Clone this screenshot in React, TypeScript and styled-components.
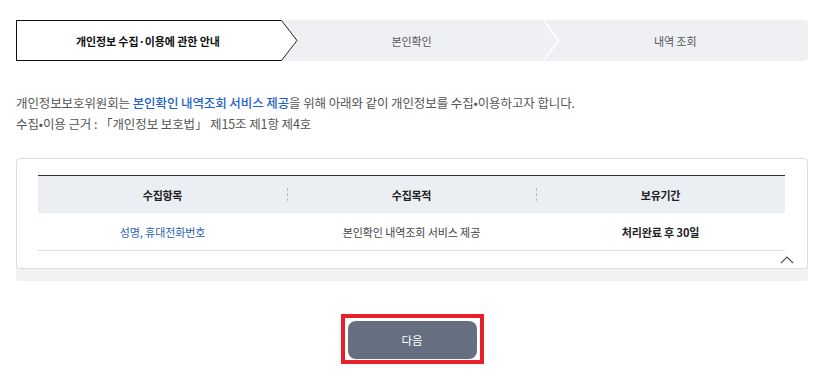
import React from 'react'
import styled, { createGlobalStyle } from 'styled-components'

const GlobalStyle = createGlobalStyle`
  body {
    margin: 0;
    background: #fff;
    font-family: 'Noto Sans CJK KR', 'Noto Sans', sans-serif;
  }
`

const Page = styled.div`
  width: 792px;
  padding: 20px 24px 0 16px;
`

const Steps = styled.ol`
  display: flex;
  height: 41px;
  margin: 0;
  padding: 0;
  list-style: none;
  background: #eff0f4;
  border-radius: 0 4px 4px 0;
`

const Step = styled.li<{ $active?: boolean }>`
  position: relative;
  flex: 1;
  display: flex;
  align-items: center;
  justify-content: center;
  box-sizing: border-box;
  font-size: 11px;
  letter-spacing: -0.1px;
  color: ${p => (p.$active ? '#111' : '#555')};
  font-weight: ${p => (p.$active ? 700 : 400)};
  background: ${p => (p.$active ? '#fff' : 'transparent')};
  border: ${p => (p.$active ? '1px solid #111' : 'none')};
  border-right: none;
  padding-right: 2px;
`

const Arrow = styled.svg<{ $boxed?: boolean }>`
  position: absolute;
  top: ${p => (p.$boxed ? '-1px' : '0')};
  left: 100%;
  z-index: 1;
  width: 17px;
  height: 41px;
`

const Chevron = ({ active }: { active?: boolean }) =>
  active ? (
    <Arrow $boxed viewBox="0 0 17 41" preserveAspectRatio="none">
      <polygon points="0,0.5 0.5,0.5 16,20.5 0.5,40.5 0,40.5" fill="#fff" />
      <polyline points="0,0.5 0.5,0.5 16,20.5 0.5,40.5 0,40.5" fill="none" stroke="#222" strokeWidth="1" />
    </Arrow>
  ) : (
    <Arrow viewBox="0 0 17 41" preserveAspectRatio="none">
      <polyline points="-0.5,0 14.5,20.5 -0.5,41" fill="none" stroke="#fff" strokeWidth="1.6" />
    </Arrow>
  )

const Intro = styled.div`
  margin-top: 31px;
  font-size: 12.5px;
  line-height: 21px;
  letter-spacing: -0.1px;
  color: #555;
`

const Em = styled.span`
  color: #1f63c6;
  font-weight: 500;
`

const Line = styled.p`
  margin: 0;
`

const CardWrap = styled.div`
  margin-top: 24px;
  background: #f1f1f2;
  border-radius: 4px;
  padding-bottom: 12px;
`

const Card = styled.div`
  background: #fff;
  border: 1px solid #dcdcdc;
  border-radius: 4px;
  padding: 16px 22px 0 21px;
`

const Table = styled.table`
  width: 100%;
  border-collapse: collapse;
  table-layout: fixed;
  border-top: 1.5px solid #333;
`

const Th = styled.th`
  position: relative;
  height: 37px;
  padding: 0;
  background: #ebeef2;
  font-size: 11px;
  letter-spacing: -0.3px;
  font-weight: 700;
  color: #222;

  & + &::before {
    content: '';
    position: absolute;
    left: 0;
    top: 12px;
    height: 13px;
    border-left: 1px dashed #b8bcc2;
  }
`

const Td = styled.td<{ $tone?: 'blue' | 'bold' }>`
  height: 37px;
  padding: 0;
  text-align: center;
  font-size: 11px;
  letter-spacing: -0.1px;
  border-bottom: 1px solid #dcdcdc;
  color: ${p => (p.$tone === 'blue' ? '#2a64b5' : p.$tone === 'bold' ? '#222' : '#444')};
  font-weight: ${p => (p.$tone === 'bold' ? 700 : 400)};
`

const Toggle = styled.div`
  display: flex;
  justify-content: flex-end;
  height: 13px;
  margin-right: -9px;
  padding-top: 4px;
`

const Actions = styled.div`
  display: flex;
  justify-content: center;
  margin-top: 33px;
`

const Focus = styled.div`
  padding: 3px 3px 1px;
  border: 4px solid #e8202a;
`

const Button = styled.button`
  display: block;
  width: 129px;
  height: 38px;
  border: none;
  border-radius: 8px;
  background: #656f80;
  color: #fff;
  font-family: inherit;
  font-size: 11.5px;
  cursor: pointer;
`

export default function App() {
  return (
    <>
      <GlobalStyle />
      <Page>
        <Steps>
          <Step $active>
            개인정보 수집·이용에 관한 안내
            <Chevron active />
          </Step>
          <Step>
            본인확인
            <Chevron />
          </Step>
          <Step>내역 조회</Step>
        </Steps>

        <Intro>
          <Line>
            개인정보보호위원회는 <Em>본인확인 내역조회 서비스 제공</Em>을 위해 아래와 같이 개인정보를 수집•이용하고자 합니다.
          </Line>
          <Line>수집•이용 근거 : 「개인정보 보호법」 제15조 제1항 제4호</Line>
        </Intro>

        <CardWrap>
          <Card>
            <Table>
              <thead>
                <tr>
                  <Th>수집항목</Th>
                  <Th>수집목적</Th>
                  <Th>보유기간</Th>
                </tr>
              </thead>
              <tbody>
                <tr>
                  <Td $tone="blue">성명, 휴대전화번호</Td>
                  <Td>본인확인 내역조회 서비스 제공</Td>
                  <Td $tone="bold">처리완료 후 30일</Td>
                </tr>
              </tbody>
            </Table>
            <Toggle>
              <svg width="14" height="9" viewBox="0 0 14 9">
                <polyline points="1,8 7,2 13,8" fill="none" stroke="#555" strokeWidth="1.2" />
              </svg>
            </Toggle>
          </Card>
        </CardWrap>

        <Actions>
          <Focus>
            <Button>다음</Button>
          </Focus>
        </Actions>
      </Page>
    </>
  )
}
